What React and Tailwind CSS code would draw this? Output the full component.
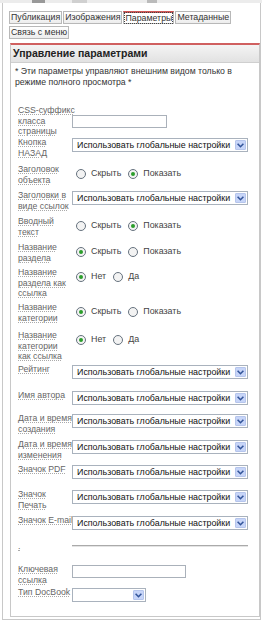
import React from "react";

const GLOBAL = "Использовать глобальные настройки";
const HIDE_SHOW = ["Скрыть", "Показать"];
const NO_YES = ["Нет", "Да"];

const rows = [
  { lines: ["CSS-суффикс", "класса", "страницы"], h: 32, type: "input", w: "w-[95px]", center: true },
  { lines: ["Кнопка", "НАЗАД"], h: 27, type: "select" },
  { lines: ["Заголовок", "объекта"], h: 26, type: "radio", opts: HIDE_SHOW, checked: 1 },
  { lines: ["Заголовки в", "виде ссылок"], h: 26, type: "select" },
  { lines: ["Вводный", "текст"], h: 26, type: "radio", opts: HIDE_SHOW, checked: 1 },
  { lines: ["Название", "раздела"], h: 25, type: "radio", opts: HIDE_SHOW, checked: 0 },
  { lines: ["Название", "раздела как", "ссылка"], h: 35, type: "radio", opts: NO_YES, checked: 0 },
  { lines: ["Название", "категории"], h: 28, type: "radio", opts: HIDE_SHOW, checked: 0 },
  { lines: ["Название", "категории", "как ссылка"], h: 34, type: "radio", opts: NO_YES, checked: 0 },
  { lines: ["Рейтинг"], h: 26, type: "select" },
  { lines: ["Имя автора"], h: 23, type: "select" },
  { lines: ["Дата и время", "создания"], h: 26, type: "select" },
  { lines: ["Дата и время", "изменения"], h: 25, type: "select" },
  { lines: ["Значок PDF"], h: 25, type: "select" },
  { lines: ["Значок", "Печать"], h: 26, type: "select" },
  { lines: ["Значок E-mail"], h: 26, type: "select" },
  { lines: ["."], h: 23, type: "sep" },
  { lines: ["Ключевая", "ссылка"], h: 23, type: "input", w: "w-[114px]" },
  { lines: ["Тип DocBook"], h: 22, type: "small" },
];

function Chevron() {
  return (
    <svg width="7" height="5" viewBox="0 0 7 5">
      <path d="M0.6 0.7 L3.5 3.7 L6.4 0.7" fill="none" stroke="#33559a" strokeWidth="1.6" />
    </svg>
  );
}

function Select({ small }) {
  return (
    <div
      className={`flex items-center h-[14px] mt-[1px] border border-[#a9b2bd] bg-white ${
        small ? "w-[74px]" : "w-[176px]"
      }`}
    >
      <span className="flex-1 pl-[4px] text-[8.9px] leading-[12px] text-[#111] whitespace-nowrap overflow-hidden">
        {small ? "" : GLOBAL}
      </span>
      <span className="w-[11px] h-[10px] mr-[1px] flex items-center justify-center bg-[#c7d5f8] border border-[#b5c5ec] rounded-[1px]">
        <Chevron />
      </span>
    </div>
  );
}

function Radio({ on }) {
  return (
    <span className="w-[10px] h-[10px] rounded-full border border-[#66727e] bg-[#f3f3f3] flex items-center justify-center">
      {on && <span className="w-[4px] h-[4px] rounded-full bg-[#2b9e2b]" />}
    </span>
  );
}

function Radios({ opts, checked }) {
  return (
    <div className="flex items-center h-[13px] mt-[3px] ml-[4px] text-[8.9px] text-[#444]">
      {opts.map((o, i) => (
        <div key={o} className="flex items-center">
          <Radio on={i === checked} />
          <span className="ml-[5px] mr-[7px]">{o}</span>
        </div>
      ))}
    </div>
  );
}

function Control({ row }) {
  if (row.type === "select") return <Select />;
  if (row.type === "small") return <Select small />;
  if (row.type === "radio") return <Radios opts={row.opts} checked={row.checked} />;
  if (row.type === "input")
    return <div className={`h-[13px] mt-[1px] border border-[#aab1ba] bg-white ${row.w}`} />;
  return (
    <div className="w-[176px] mt-[4px] border-t border-b border-t-[#aaa] border-b-[#e4e4e4]" />
  );
}

function Row({ row }) {
  return (
    <div
      className={`flex ${row.center ? "items-center" : "items-start"}`}
      style={{ height: row.h }}
    >
      <div className="w-[61px] shrink-0 pl-[7px] text-[8.7px] leading-[10.5px] text-[#666] whitespace-nowrap">
        {row.lines.map((l) => (
          <div key={l}>
            <span className="underline decoration-dotted decoration-[#aaa] underline-offset-[1px]">
              {l}
            </span>
          </div>
        ))}
      </div>
      <Control row={row} />
    </div>
  );
}

function Tab({ label, active }) {
  return (
    <div
      className={`h-[13px] px-[1px] text-[8.8px] leading-[11px] text-[#333] border border-[#b8b8b8] ${
        active ? "bg-white border-t-2 border-t-[#cf5656]" : "bg-gradient-to-b from-white to-[#ededed]"
      }`}
    >
      <span className={active ? "outline outline-1 outline-dotted outline-[#444]" : ""}>
        {label}
      </span>
    </div>
  );
}

export default function App() {
  return (
    <div
      className="w-[262px] h-[625px] bg-white overflow-hidden"
      style={{ fontFamily: '"Liberation Sans", Arial, sans-serif' }}
    >
      <div className="h-[3px] bg-[#ececec] flex">
        <div className="w-[32px]" />
        <div className="w-[13px] bg-[#999]" />
        <div className="w-[27px]" />
        <div className="w-[15px] bg-[#d0d0d0]" />
        <div className="w-[60px]" />
        <div className="w-[10px] bg-[#bbb]" />
      </div>
      <div className="ml-[2px] mr-[1px] h-[617px] border-l border-r border-b border-[#c8c8c8] pt-[8px]">
        <div className="flex flex-wrap gap-x-[1px] gap-y-[2px] pl-[6px] pr-[4px]">
          <Tab label="Публикация" />
          <Tab label="Изображения" />
          <Tab label="Параметры" active />
          <Tab label="Метаданные" />
          <Tab label="Связь с меню" />
        </div>
        <div className="ml-[7px] mt-[4px] w-[250px] border border-[#c8c8c8] border-t-2 border-t-[#d06060]">
          <div className="h-[18px] flex items-center px-[2px] bg-gradient-to-b from-[#f4f4f4] to-[#e2e2e2] border-b border-[#cfcfcf] text-[10.5px] font-bold text-[#222]">
            Управление параметрами
          </div>
          <div className="px-[4px] pt-[3px] text-[8.7px] leading-[10.5px] text-[#333]">
            * Эти параметры управляют внешним видом только в режиме полного просмотра *
          </div>
          <div className="mt-[18px] pb-[7px]">
            {rows.map((r, i) => (
              <Row key={i} row={r} />
            ))}
          </div>
        </div>
      </div>
    </div>
  );
}
